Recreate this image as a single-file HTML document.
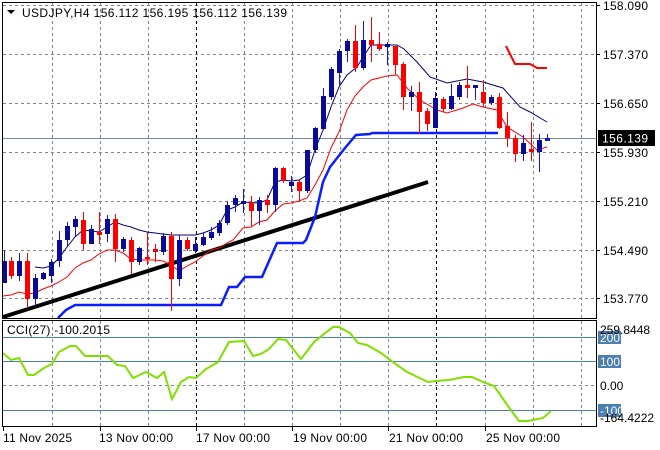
<!DOCTYPE html>
<html><head><meta charset="utf-8"><style>
html,body{margin:0;padding:0;background:#fff;}
svg{display:block;font-family:"Liberation Sans",sans-serif;}
</style></head><body>
<svg width="660" height="450" viewBox="0 0 660 450" xmlns="http://www.w3.org/2000/svg">
<rect width="660" height="450" fill="#fff"/>
<g stroke="#7a8694" stroke-width="1" stroke-dasharray="3,3">
<line x1="3" y1="5.5" x2="596" y2="5.5"/><line x1="3" y1="54.5" x2="596" y2="54.5"/><line x1="3" y1="103.5" x2="596" y2="103.5"/><line x1="3" y1="152.5" x2="596" y2="152.5"/><line x1="3" y1="201.5" x2="596" y2="201.5"/><line x1="3" y1="250.5" x2="596" y2="250.5"/><line x1="3" y1="298.5" x2="596" y2="298.5"/>
<line x1="52.5" y1="3" x2="52.5" y2="318"/><line x1="100.5" y1="3" x2="100.5" y2="318"/><line x1="148.5" y1="3" x2="148.5" y2="318"/><line x1="244.5" y1="3" x2="244.5" y2="318"/><line x1="292.5" y1="3" x2="292.5" y2="318"/><line x1="340.5" y1="3" x2="340.5" y2="318"/><line x1="388.5" y1="3" x2="388.5" y2="318"/><line x1="485.5" y1="3" x2="485.5" y2="318"/><line x1="533.5" y1="3" x2="533.5" y2="318"/><line x1="581.5" y1="3" x2="581.5" y2="318"/>
<line x1="52.5" y1="321" x2="52.5" y2="426"/><line x1="100.5" y1="321" x2="100.5" y2="426"/><line x1="148.5" y1="321" x2="148.5" y2="426"/><line x1="244.5" y1="321" x2="244.5" y2="426"/><line x1="292.5" y1="321" x2="292.5" y2="426"/><line x1="340.5" y1="321" x2="340.5" y2="426"/><line x1="388.5" y1="321" x2="388.5" y2="426"/><line x1="485.5" y1="321" x2="485.5" y2="426"/><line x1="533.5" y1="321" x2="533.5" y2="426"/><line x1="581.5" y1="321" x2="581.5" y2="426"/>
<line x1="3" y1="385.5" x2="596" y2="385.5"/>
</g>
<g stroke="#000" stroke-width="1" stroke-dasharray="3,3">
<line x1="196.5" y1="3" x2="196.5" y2="318"/><line x1="436.5" y1="3" x2="436.5" y2="318"/>
<line x1="196.5" y1="321" x2="196.5" y2="426"/><line x1="436.5" y1="321" x2="436.5" y2="426"/>
</g>
<line x1="3" y1="138.5" x2="596" y2="138.5" stroke="#778899" stroke-width="1"/>
<g stroke="#4a7faf" stroke-width="1">
<line x1="3" y1="337.5" x2="596" y2="337.5"/><line x1="3" y1="361.5" x2="596" y2="361.5"/><line x1="3" y1="410.5" x2="596" y2="410.5"/>
</g>
<line x1="3" y1="317" x2="428" y2="182" stroke="#000" stroke-width="4"/>
<polyline fill="none" stroke="#0a1eff" stroke-width="2.5" points="58,318 66,310 75,305 221,305 229,287 237,287 245,277 262,277 277,243 303,243 306,240 315,217 323,182 330,167 345,148 356,135 370,134 372,133 498,133"/>
<polyline fill="none" stroke="#f00" stroke-width="2" points="506,46 515,64 530,64 537,68 547,68"/>
<polyline fill="none" stroke="#f00" stroke-width="1" points="3,296 11,295 19,292 27,294 35,293 43,289 51,286 59,282 67,277 75,268 83,263 91,260 99,254 107,250 115,250 123,253 131,259 139,260 147,260 155,260 163,261 171,265 179,271 187,266 195,262 203,256 211,250 219,248 227,243 233,240 243,228 251,227 259,222 267,220 275,211 283,204 291,203 299,201 307,198 315,185 323,170 331,148 339,132 347,110 355,96 363,87 371,80 379,78 387,76 397,75 407,88 420,100 437,110 447,113 463,108 473,104 483,107 497,110 507,127 523,137 537,150 547,147"/>
<polyline fill="none" stroke="#000080" stroke-width="1" points="35,267 43,268 51,266 59,258 67,247 75,237 83,230 91,231 99,232 107,227 115,222 123,225 131,227 139,230 147,232 155,233 163,234 171,235 195,235 203,233 211,230 219,225 227,210 235,207 243,202 259,203 267,200 275,182 283,180 291,181 299,180 307,175 315,150 323,130 331,107 339,87 347,75 357,67 363,57 371,45 377,45 397,45 404,49 417,62 430,77 447,83 467,79 483,82 503,88 520,107 530,112 547,122"/>
<g stroke-width="1">
<line x1="4.5" y1="250" x2="4.5" y2="283" stroke="#1414e6"/><rect x="2" y="261" width="5" height="22" fill="#0a0a9a"/>
<line x1="11.5" y1="257" x2="11.5" y2="279" stroke="#f00"/><rect x="9" y="261" width="5" height="15" fill="#f00"/>
<line x1="19.5" y1="253" x2="19.5" y2="281" stroke="#1414e6"/><rect x="17" y="261" width="5" height="15" fill="#0a0a9a"/>
<line x1="27.5" y1="253" x2="27.5" y2="307" stroke="#f00"/><rect x="25" y="261" width="5" height="38" fill="#f00"/>
<line x1="35.5" y1="274" x2="35.5" y2="305" stroke="#1414e6"/><rect x="33" y="278" width="5" height="21" fill="#0a0a9a"/>
<line x1="43.5" y1="272" x2="43.5" y2="280" stroke="#1414e6"/><rect x="41" y="273" width="5" height="6" fill="#0a0a9a"/>
<line x1="51.5" y1="259" x2="51.5" y2="283" stroke="#1414e6"/><rect x="49" y="262" width="5" height="14" fill="#0a0a9a"/>
<line x1="59.5" y1="231" x2="59.5" y2="267" stroke="#1414e6"/><rect x="57" y="240" width="5" height="21" fill="#0a0a9a"/>
<line x1="67.5" y1="222" x2="67.5" y2="247" stroke="#1414e6"/><rect x="65" y="226" width="5" height="14" fill="#0a0a9a"/>
<line x1="75.5" y1="216" x2="75.5" y2="236" stroke="#1414e6"/><rect x="73" y="219" width="5" height="8" fill="#0a0a9a"/>
<line x1="83.5" y1="212" x2="83.5" y2="250" stroke="#f00"/><rect x="81" y="220" width="5" height="24" fill="#f00"/>
<line x1="91.5" y1="225" x2="91.5" y2="244" stroke="#1414e6"/><rect x="89" y="229" width="5" height="15" fill="#0a0a9a"/>
<line x1="99.5" y1="212" x2="99.5" y2="244" stroke="#f00"/><rect x="97" y="232" width="5" height="3" fill="#f00"/>
<line x1="107.5" y1="215" x2="107.5" y2="242" stroke="#1414e6"/><rect x="105" y="219" width="5" height="15" fill="#0a0a9a"/>
<line x1="115.5" y1="214" x2="115.5" y2="262" stroke="#f00"/><rect x="113" y="219" width="5" height="30" fill="#f00"/>
<line x1="123.5" y1="237" x2="123.5" y2="252" stroke="#1414e6"/><rect x="121" y="239" width="5" height="10" fill="#0a0a9a"/>
<line x1="131.5" y1="237" x2="131.5" y2="274" stroke="#f00"/><rect x="129" y="240" width="5" height="22" fill="#f00"/>
<line x1="139.5" y1="247" x2="139.5" y2="265" stroke="#1414e6"/><rect x="137" y="248" width="5" height="14" fill="#0a0a9a"/>
<line x1="147.5" y1="232" x2="147.5" y2="265" stroke="#f00"/><rect x="145" y="257" width="5" height="2" fill="#f00"/>
<line x1="155.5" y1="244" x2="155.5" y2="262" stroke="#f00"/><rect x="153" y="249" width="5" height="3" fill="#f00"/>
<line x1="163.5" y1="233" x2="163.5" y2="255" stroke="#1414e6"/><rect x="161" y="236" width="5" height="16" fill="#0a0a9a"/>
<line x1="171.5" y1="232" x2="171.5" y2="311" stroke="#f00"/><rect x="169" y="236" width="5" height="43" fill="#f00"/>
<line x1="179.5" y1="235" x2="179.5" y2="286" stroke="#1414e6"/><rect x="177" y="240" width="5" height="39" fill="#0a0a9a"/>
<line x1="187.5" y1="237" x2="187.5" y2="251" stroke="#f00"/><rect x="185" y="240" width="5" height="9" fill="#f00"/>
<line x1="195.5" y1="237" x2="195.5" y2="253" stroke="#1414e6"/><rect x="193" y="244" width="5" height="7" fill="#0a0a9a"/>
<line x1="203.5" y1="233" x2="203.5" y2="246" stroke="#1414e6"/><rect x="201" y="237" width="5" height="8" fill="#0a0a9a"/>
<line x1="211.5" y1="227" x2="211.5" y2="240" stroke="#1414e6"/><rect x="209" y="232" width="5" height="6" fill="#0a0a9a"/>
<line x1="219.5" y1="220" x2="219.5" y2="236" stroke="#1414e6"/><rect x="217" y="223" width="5" height="10" fill="#0a0a9a"/>
<line x1="227.5" y1="201" x2="227.5" y2="225" stroke="#1414e6"/><rect x="225" y="205" width="5" height="18" fill="#0a0a9a"/>
<line x1="235.5" y1="195" x2="235.5" y2="212" stroke="#1414e6"/><rect x="233" y="198" width="5" height="7" fill="#0a0a9a"/>
<line x1="243.5" y1="189" x2="243.5" y2="213" stroke="#1414e6"/><rect x="241" y="201" width="5" height="3" fill="#0a0a9a"/>
<line x1="251.5" y1="196" x2="251.5" y2="226" stroke="#f00"/><rect x="249" y="202" width="5" height="9" fill="#f00"/>
<line x1="259.5" y1="197" x2="259.5" y2="225" stroke="#1414e6"/><rect x="257" y="200" width="5" height="11" fill="#0a0a9a"/>
<line x1="267.5" y1="195" x2="267.5" y2="213" stroke="#f00"/><rect x="265" y="200" width="5" height="5" fill="#f00"/>
<line x1="275.5" y1="167" x2="275.5" y2="212" stroke="#1414e6"/><rect x="273" y="168" width="5" height="37" fill="#0a0a9a"/>
<line x1="283.5" y1="167" x2="283.5" y2="183" stroke="#f00"/><rect x="281" y="168" width="5" height="13" fill="#f00"/>
<line x1="291.5" y1="176" x2="291.5" y2="192" stroke="#1414e6"/><rect x="289" y="182" width="5" height="4" fill="#0a0a9a"/>
<line x1="299.5" y1="180" x2="299.5" y2="202" stroke="#f00"/><rect x="297" y="182" width="5" height="9" fill="#f00"/>
<line x1="307.5" y1="150" x2="307.5" y2="193" stroke="#1414e6"/><rect x="305" y="150" width="5" height="41" fill="#0a0a9a"/>
<line x1="315.5" y1="127" x2="315.5" y2="153" stroke="#1414e6"/><rect x="313" y="128" width="5" height="22" fill="#0a0a9a"/>
<line x1="323.5" y1="88" x2="323.5" y2="130" stroke="#1414e6"/><rect x="321" y="96" width="5" height="33" fill="#0a0a9a"/>
<line x1="331.5" y1="67" x2="331.5" y2="100" stroke="#1414e6"/><rect x="329" y="69" width="5" height="28" fill="#0a0a9a"/>
<line x1="339.5" y1="49" x2="339.5" y2="85" stroke="#1414e6"/><rect x="337" y="51" width="5" height="22" fill="#0a0a9a"/>
<line x1="347.5" y1="39" x2="347.5" y2="62" stroke="#1414e6"/><rect x="345" y="41" width="5" height="10" fill="#0a0a9a"/>
<line x1="355.5" y1="25" x2="355.5" y2="72" stroke="#f00"/><rect x="353" y="41" width="5" height="27" fill="#f00"/>
<line x1="363.5" y1="21" x2="363.5" y2="70" stroke="#1414e6"/><rect x="361" y="40" width="5" height="28" fill="#0a0a9a"/>
<line x1="371.5" y1="17" x2="371.5" y2="62" stroke="#f00"/><rect x="369" y="40" width="5" height="5" fill="#f00"/>
<line x1="379.5" y1="32" x2="379.5" y2="51" stroke="#f00"/><rect x="377" y="44" width="5" height="5" fill="#f00"/>
<line x1="387.5" y1="42" x2="387.5" y2="65" stroke="#1414e6"/><rect x="385" y="44" width="5" height="3" fill="#0a0a9a"/>
<line x1="395.5" y1="46" x2="395.5" y2="75" stroke="#f00"/><rect x="393" y="46" width="5" height="19" fill="#f00"/>
<line x1="403.5" y1="62" x2="403.5" y2="110" stroke="#f00"/><rect x="401" y="64" width="5" height="33" fill="#f00"/>
<line x1="411.5" y1="86" x2="411.5" y2="111" stroke="#1414e6"/><rect x="409" y="92" width="5" height="5" fill="#0a0a9a"/>
<line x1="419.5" y1="82" x2="419.5" y2="134" stroke="#f00"/><rect x="417" y="92" width="5" height="20" fill="#f00"/>
<line x1="427.5" y1="108" x2="427.5" y2="131" stroke="#f00"/><rect x="425" y="111" width="5" height="13" fill="#f00"/>
<line x1="435.5" y1="92" x2="435.5" y2="128" stroke="#1414e6"/><rect x="433" y="98" width="5" height="30" fill="#0a0a9a"/>
<line x1="443.5" y1="97" x2="443.5" y2="112" stroke="#f00"/><rect x="441" y="99" width="5" height="10" fill="#f00"/>
<line x1="451.5" y1="84" x2="451.5" y2="110" stroke="#1414e6"/><rect x="449" y="96" width="5" height="13" fill="#0a0a9a"/>
<line x1="459.5" y1="82" x2="459.5" y2="100" stroke="#1414e6"/><rect x="457" y="85" width="5" height="12" fill="#0a0a9a"/>
<line x1="467.5" y1="66" x2="467.5" y2="98" stroke="#f00"/><rect x="465" y="85" width="5" height="3" fill="#f00"/>
<line x1="475.5" y1="85" x2="475.5" y2="100" stroke="#1414e6"/><rect x="473" y="85" width="5" height="3" fill="#0a0a9a"/>
<line x1="483.5" y1="80" x2="483.5" y2="107" stroke="#f00"/><rect x="481" y="92" width="5" height="11" fill="#f00"/>
<line x1="491.5" y1="95" x2="491.5" y2="105" stroke="#1414e6"/><rect x="489" y="97" width="5" height="6" fill="#0a0a9a"/>
<line x1="499.5" y1="93" x2="499.5" y2="129" stroke="#f00"/><rect x="497" y="97" width="5" height="31" fill="#f00"/>
<line x1="507.5" y1="112" x2="507.5" y2="147" stroke="#f00"/><rect x="505" y="126" width="5" height="12" fill="#f00"/>
<line x1="515.5" y1="135" x2="515.5" y2="162" stroke="#f00"/><rect x="513" y="138" width="5" height="16" fill="#f00"/>
<line x1="523.5" y1="135" x2="523.5" y2="161" stroke="#1414e6"/><rect x="521" y="143" width="5" height="11" fill="#0a0a9a"/>
<line x1="531.5" y1="122" x2="531.5" y2="161" stroke="#f00"/><rect x="529" y="149" width="5" height="3" fill="#f00"/>
<line x1="539.5" y1="134" x2="539.5" y2="172" stroke="#1414e6"/><rect x="537" y="140" width="5" height="12" fill="#0a0a9a"/>
<line x1="547.5" y1="134" x2="547.5" y2="141" stroke="#1414e6"/><rect x="545" y="138" width="5" height="3" fill="#1414e6"/>
</g>
<polyline fill="none" stroke="#7fe000" stroke-width="2" points="3,353 11,360 19,358 28,375 34,375 44,368 52,364 59,352 70,346 76,346 85,356 108,356 117,365 125,366 133,378 146,372 157,378 164,372 172,399 181,382 189,377 196,378 206,369 218,362 229,342 244,341 253,356 261,354 269,349 278,339 286,340 301,359 314,342 333,327 339,327 350,333 358,343 367,345 381,353 390,360 407,372 428,382 436,381 449,380 464,377 472,377 483,382 494,386 508,406 519,421 528,421 543,418 551,411"/>
<rect x="2.5" y="2.5" width="594" height="316" fill="none" stroke="#000"/>
<rect x="2.5" y="320.5" width="594" height="106" fill="none" stroke="#000"/>
<g stroke="#000">
<line x1="596" y1="5.5" x2="600" y2="5.5"/><line x1="596" y1="54.5" x2="600" y2="54.5"/><line x1="596" y1="103.5" x2="600" y2="103.5"/><line x1="596" y1="152.5" x2="600" y2="152.5"/><line x1="596" y1="201.5" x2="600" y2="201.5"/><line x1="596" y1="250.5" x2="600" y2="250.5"/><line x1="596" y1="298.5" x2="600" y2="298.5"/>
<line x1="3.5" y1="426" x2="3.5" y2="431"/><line x1="100.5" y1="426" x2="100.5" y2="431"/><line x1="196.5" y1="426" x2="196.5" y2="431"/><line x1="292.5" y1="426" x2="292.5" y2="431"/><line x1="388.5" y1="426" x2="388.5" y2="431"/><line x1="485.5" y1="426" x2="485.5" y2="431"/>
</g>
<g font-size="12" fill="#000">
<path d="M7,10 L15,10 L11,14 Z" fill="#000"/>
<text x="22" y="17" textLength="265" lengthAdjust="spacing">USDJPY,H4  156.112 156.195 156.112 156.139</text>
<text x="603" y="10" textLength="45">158.090</text>
<text x="603" y="59" textLength="45">157.370</text>
<text x="603" y="108" textLength="45">156.650</text>
<text x="603" y="157" textLength="45">155.930</text>
<text x="603" y="206" textLength="45">155.210</text>
<text x="603" y="255" textLength="45">154.490</text>
<text x="603" y="303" textLength="45">153.770</text>
<rect x="598" y="130" width="57" height="16" fill="#000"/>
<text x="602" y="142.5" fill="#fff" textLength="46">156.139</text>
<text x="7" y="334" textLength="103">CCI(27) -100.2015</text>
<rect x="598" y="331" width="23" height="13" fill="#4a7faf"/>
<text x="600" y="342" fill="#fff">200</text>
<text x="600" y="334">259.8448</text>
<rect x="598" y="355" width="23" height="13" fill="#4a7faf"/>
<text x="600" y="366" fill="#fff">100</text>
<text x="600" y="390">0.00</text>
<rect x="598" y="404" width="23" height="13" fill="#4a7faf"/>
<text x="600" y="415" fill="#fff">-100</text>
<text x="600" y="422">-164.4222</text>
<text x="3" y="442" textLength="69">11 Nov 2025</text>
<text x="99" y="442" textLength="74">13 Nov 00:00</text>
<text x="196" y="442" textLength="74">17 Nov 00:00</text>
<text x="293" y="442" textLength="74">19 Nov 00:00</text>
<text x="389" y="442" textLength="74">21 Nov 00:00</text>
<text x="486" y="442" textLength="74">25 Nov 00:00</text>
</g>
</svg>
</body></html>
